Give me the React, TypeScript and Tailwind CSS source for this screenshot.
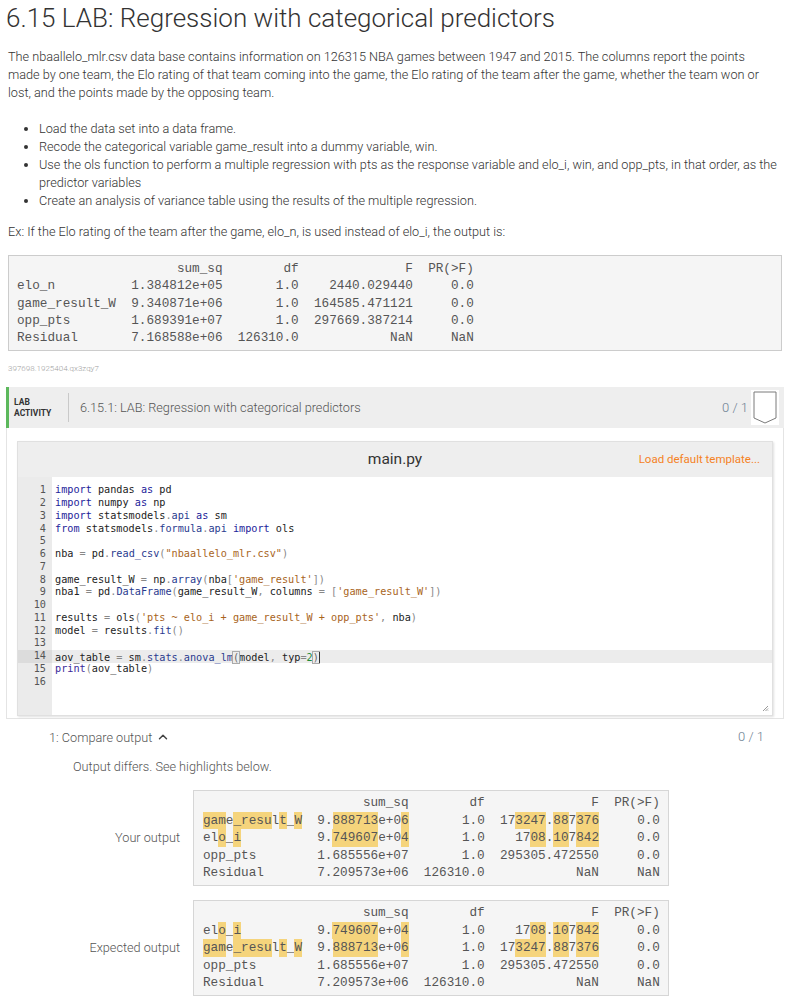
import { ChevronUp } from 'lucide-react';

type Seg = [string, string];

const K = 'text-[#1d1d9a]';
const P = 'text-[#2a3b8f]';
const S = 'text-[#a8641c]';
const N = 'text-[#1f8a3b]';
const O = 'text-[#888888]';
const V = 'text-[#222222]';
const B = 'text-[#3a2a9a]';

const code: Seg[][] = [
  [['import', K], [' pandas ', V], ['as', K], [' pd', V]],
  [['import', K], [' numpy ', V], ['as', K], [' np', V]],
  [['import', K], [' statsmodels', V], ['.', O], ['api', P], [' ', V], ['as', K], [' sm', V]],
  [['from', K], [' statsmodels', V], ['.', O], ['formula', P], ['.', O], ['api', P], [' ', V], ['import', K], [' ols', V]],
  [],
  [['nba', V], [' = ', O], ['pd', V], ['.', O], ['read_csv', P], ['(', O], ['"nbaallelo_mlr.csv"', S], [')', O]],
  [],
  [['game_result_W', V], [' = ', O], ['np', V], ['.', O], ['array', P], ['(', O], ['nba', V], ['[', O], ["'game_result'", S], ['])', O]],
  [['nba1', V], [' = ', O], ['pd', V], ['.', O], ['DataFrame', P], ['(', O], ['game_result_W', V], [', ', O], ['columns', V], [' = ', O], ['[', O], ["'game_result_W'", S], ['])', O]],
  [],
  [['results', V], [' = ', O], ['ols', V], ['(', O], ["'pts ~ elo_i + game_result_W + opp_pts'", S], [', ', O], ['nba', V], [')', O]],
  [['model', V], [' = ', O], ['results', V], ['.', O], ['fit', P], ['()', O]],
  [],
  [],
  [['print', B], ['(', O], ['aov_table', V], [')', O]],
  [],
];

function row(idx: string, ss: string, df: string, f: string, pr: string) {
  return idx.padEnd(13) + ss.padStart(14) + df.padStart(10) + f.padStart(15) + pr.padStart(8);
}

const head = row('', 'sum_sq', 'df', 'F', 'PR(>F)');

const exRows = [
  head,
  row('elo_n', '1.384812e+05', '1.0', '2440.029440', '0.0'),
  row('game_result_W', '9.340871e+06', '1.0', '164585.471121', '0.0'),
  row('opp_pts', '1.689391e+07', '1.0', '297669.387214', '0.0'),
  row('Residual', '7.168588e+06', '126310.0', 'NaN', 'NaN'),
];

const gameRow = row('game_result_W', '9.888713e+06', '1.0', '173247.887376', '0.0');
const eloRow = row('elo_i', '9.749607e+04', '1.0', '1708.107842', '0.0');
const oppRow = row('opp_pts', '1.685556e+07', '1.0', '295305.472550', '0.0');
const resRow = row('Residual', '7.209573e+06', '126310.0', 'NaN', 'NaN');

const gameHl: [number, number][] = [[0, 3], [4, 9], [10, 11], [12, 13], [17, 23], [26, 27], [41, 45], [46, 48], [49, 52]];
const eloHl: [number, number][] = [[2, 3], [4, 5], [17, 23], [26, 27], [43, 45], [46, 48], [49, 52]];

function Line({ text, hl = [] }: { text: string; hl?: [number, number][] }) {
  const parts: { t: string; on: boolean }[] = [];
  let pos = 0;
  for (const [a, b] of hl) {
    if (a > pos) parts.push({ t: text.slice(pos, a), on: false });
    parts.push({ t: text.slice(a, b), on: true });
    pos = b;
  }
  if (pos < text.length) parts.push({ t: text.slice(pos), on: false });
  return (
    <div className="h-[17.6px] whitespace-pre leading-[17.6px]">
      {parts.map((p, i) =>
        p.on ? (
          <span key={i} className="inline-block bg-[#f5d47c] leading-[17.6px]">{p.t}</span>
        ) : (
          <span key={i}>{p.t}</span>
        )
      )}
    </div>
  );
}

function OutputBox({ label, rows }: { label: string; rows: { text: string; hl?: [number, number][] }[] }) {
  return (
    <div className="flex items-center">
      <div className="w-[193px] pr-[13px] text-right text-[12.7px] font-light text-[#555]">{label}</div>
      <div className="w-[476px] border border-[#d6d6d6] bg-[#f5f5f5] py-[3px] pl-[9px] font-['Liberation_Mono',monospace] text-[12.7px] text-[#555]">
        {rows.map((r, i) => (
          <Line key={i} text={r.text} hl={r.hl} />
        ))}
      </div>
    </div>
  );
}

export default function App() {
  return (
    <div className="w-[788px] bg-white pb-[8px] font-['Roboto',sans-serif] text-[#333]">
      {/* Title + description */}
      <div className="px-[6px] pt-[1px]">
        <h1 className="text-[26px] font-light leading-[34px] text-[#333]">6.15 LAB: Regression with categorical predictors</h1>
      </div>
      <div className="px-[8px] text-[12.7px] font-light leading-[18px] text-[#333]">
        <p className="mt-[13px] whitespace-nowrap">
          The nbaallelo_mlr.csv data base contains information on 126315 NBA games between 1947 and 2015. The columns report the points
          <br />
          made by one team, the Elo rating of that team coming into the game, the Elo rating of the team after the game, whether the team won or
          <br />
          lost, and the points made by the opposing team.
        </p>
        <ul className="mt-[18px] list-disc whitespace-nowrap pl-[31px]">
          <li>Load the data set into a data frame.</li>
          <li>Recode the categorical variable game_result into a dummy variable, win.</li>
          <li>
            Use the ols function to perform a multiple regression with pts as the response variable and elo_i, win, and opp_pts, in that order, as the
            <br />
            predictor variables
          </li>
          <li>Create an analysis of variance table using the results of the multiple regression.</li>
        </ul>
        <p className="mt-[13px]">Ex: If the Elo rating of the team after the game, elo_n, is used instead of elo_i, the output is:</p>

        <div className="mt-[14px] w-[774px] border border-[#cccccc] bg-[#f5f5f5] py-[4px] pl-[8px] font-['Liberation_Mono',monospace] text-[12.7px] text-[#555]">
          {exRows.map((r, i) => (
            <div key={i} className="h-[17.3px] whitespace-pre leading-[17.3px]">{r}</div>
          ))}
        </div>
        <div className="mt-[13px] text-[8px] leading-[10px] text-[#a0a0a0]">397698.1925404.qx3zqy7</div>
      </div>

      {/* Lab activity */}
      <div className="ml-[6px] mt-[13px] w-[778px]">
        <div className="flex h-[41px] items-center border-l-[3px] border-[#5cb85c] bg-[#eeeeee]">
          <div className="w-[59px] pl-[5px] text-[8.5px] font-bold leading-[11px] text-[#333]">
            LAB
            <br />
            ACTIVITY
          </div>
          <div className="h-[29px] w-px bg-[#c9c9c9]" />
          <div className="ml-[11px] flex-1 text-[12.7px] font-light text-[#555]">6.15.1: LAB: Regression with categorical predictors</div>
          <div className="text-[13px] font-light text-[#6d7f92]">0 / 1</div>
          <div className="ml-[3px] mr-[5px] flex h-[35px] w-[28px] items-center justify-center bg-white">
            <svg width="24" height="33" viewBox="0 0 24 33">
              <path d="M1 1 H23 V27 L12 32 L1 27 Z" fill="white" stroke="#7a7a7a" strokeWidth="1" />
            </svg>
          </div>
        </div>

        <div className="border-x border-b border-[#e4e4e4] px-[10px] pb-[2px] pt-[13px]">
          <div className="border border-[#e0e0e0] shadow-[1px_1px_2px_rgba(0,0,0,0.12)]">
            <div className="grid h-[35px] grid-cols-[1fr_auto_1fr] items-center bg-[#eeeeee]">
              <div />
              <div className="text-[15.5px] text-[#333]">main.py</div>
              <div className="pr-[12px] text-right text-[11.5px] text-[#f5821f]">Load default template...</div>
            </div>
            <div className="flex h-[238px] font-['DejaVu_Sans_Mono',monospace] text-[10.2px]">
              <div className="w-[34px] bg-[#ebebeb] pt-[7px] text-right text-[#555]">
                {code.map((_, i) => (
                  <div key={i} className={i === 13 ? 'h-[12.75px] bg-[#dcdcdc] pr-[6px] leading-[12.75px]' : 'h-[12.75px] pr-[6px] leading-[12.75px]'}>
                    {i + 1}
                  </div>
                ))}
              </div>
              <div className="flex flex-1 flex-col pt-[7px]">
                {code.map((segs, i) =>
                  i === 13 ? (
                    <div key={i} className="h-[12.75px] whitespace-pre bg-[#ececec] pl-[3px] leading-[12.75px]">
                      <span className={V}>aov_table</span>
                      <span className={O}> = </span>
                      <span className={V}>sm</span>
                      <span className={O}>.</span>
                      <span className={P}>stats</span>
                      <span className={O}>.</span>
                      <span className={P}>anova_lm</span>
                      <span className="text-[#666] outline outline-1 outline-[#aaaaaa]">(</span>
                      <span className={V}>model</span>
                      <span className={O}>, </span>
                      <span className={V}>typ</span>
                      <span className={O}>=</span>
                      <span className={N}>2</span>
                      <span className="text-[#666] outline outline-1 outline-[#aaaaaa]">)</span>
                      <span className="inline-block h-[11px] w-px translate-y-[2px] bg-[#333]" />
                    </div>
                  ) : (
                    <div key={i} className="h-[12.75px] whitespace-pre pl-[3px] leading-[12.75px]">
                      {segs.map(([t, c], j) => (
                        <span key={j} className={c}>{t}</span>
                      ))}
                    </div>
                  )
                )}
                <div className="mt-auto self-end pb-[3px] pr-[3px]">
                  <svg width="7" height="7" viewBox="0 0 7 7">
                    <path d="M6 1 L1 6 M6 3.5 L3.5 6 M6 5.5 L5.5 6" stroke="#999" strokeWidth="1" />
                  </svg>
                </div>
              </div>
            </div>
          </div>
        </div>

        {/* Compare output */}
        <div className="mt-[8px] flex items-center justify-between pl-[43px] pr-[20px] text-[12.7px] font-light text-[#555]">
          <div className="flex items-center gap-[4px]">
            1: Compare output
            <ChevronUp size={14} strokeWidth={2.5} className="text-[#444]" />
          </div>
          <div className="text-[13px] text-[#6d7f92]">0 / 1</div>
        </div>
      </div>

      <div className="mt-[10px] pl-[73px] text-[12.7px] font-light text-[#555]">Output differs. See highlights below.</div>

      <div className="mt-[14px]">
        <OutputBox
          label="Your output"
          rows={[{ text: head }, { text: gameRow, hl: gameHl }, { text: eloRow, hl: eloHl }, { text: oppRow }, { text: resRow }]}
        />
      </div>
      <div className="mt-[14px]">
        <OutputBox
          label="Expected output"
          rows={[{ text: head }, { text: eloRow, hl: eloHl }, { text: gameRow, hl: gameHl }, { text: oppRow }, { text: resRow }]}
        />
      </div>
    </div>
  );
}
